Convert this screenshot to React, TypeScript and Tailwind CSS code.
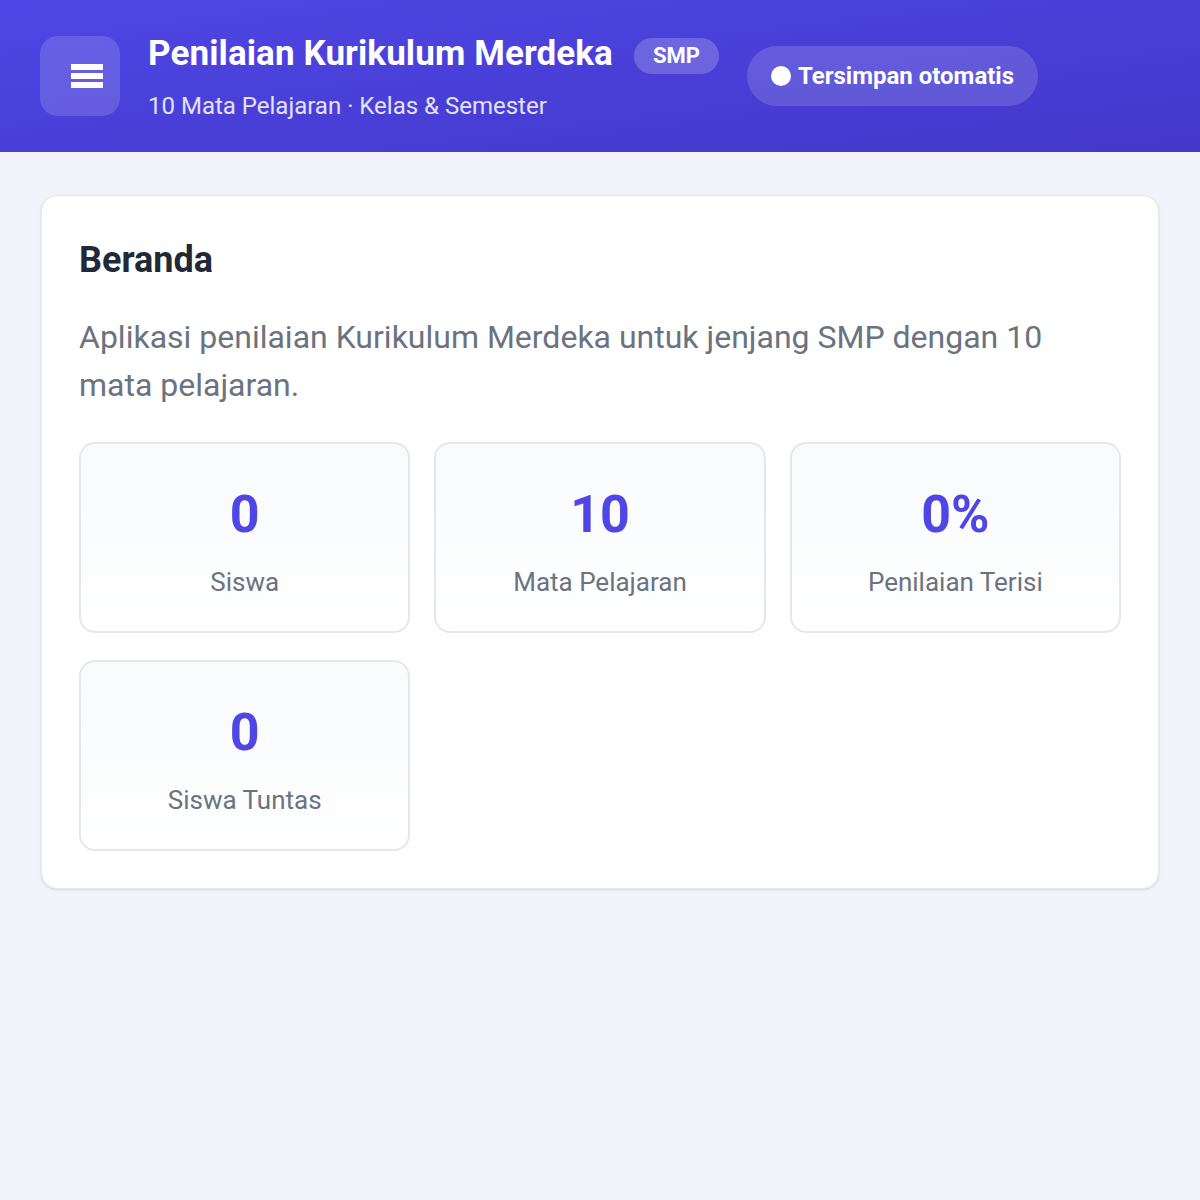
const stats = [
  { value: "0", label: "Siswa" },
  { value: "10", label: "Mata Pelajaran" },
  { value: "0%", label: "Penilaian Terisi" },
  { value: "0", label: "Siswa Tuntas" },
];

function Header() {
  return (
    <header className="h-[152px] bg-gradient-to-br from-[#4f46e5] to-[#4338ca] px-10 flex items-center text-white">
      <button className="w-20 h-20 rounded-[18px] bg-white/15 flex items-center justify-center shrink-0">
        <svg width="32" height="24" viewBox="0 0 32 24" fill="white" className="ml-[14px]">
          <rect x="0" y="0" width="32" height="6" />
          <rect x="0" y="9" width="32" height="6" />
          <rect x="0" y="18" width="32" height="6" />
        </svg>
      </button>

      <div className="ml-7 flex flex-col">
        <div className="flex items-center gap-[21px]">
          <h1 className="text-[35px] leading-[42px] font-bold tracking-[0.1px]">
            Penilaian Kurikulum Merdeka
          </h1>
          <span className="mt-[4px] h-[36px] px-[19px] rounded-full bg-white/20 text-[22px] font-bold flex items-center">
            SMP
          </span>
        </div>
        <p className="mt-[17px] text-[24px] leading-7 text-white/85">
          10 Mata Pelajaran · Kelas &amp; Semester
        </p>
      </div>

      <div className="ml-7 h-[60px] pl-6 pr-6 rounded-full bg-white/15 flex items-center gap-[7px] text-[24px] font-bold">
        <span className="w-[20px] h-[20px] rounded-full bg-white" />
        Tersimpan otomatis
      </div>
    </header>
  );
}

export default function App() {
  return (
    <div className="min-h-[1200px] bg-[#f3f4fb] font-['Roboto',sans-serif]">
      <Header />

      <main className="px-[41px] pt-[43px]">
        <section className="bg-white rounded-2xl border border-[#e5e7eb] shadow-sm px-[37px] pt-[42px] pb-[37px]">
          <h2 className="text-[36px] leading-[44px] font-bold text-[#1f2937]">
            Beranda
          </h2>
          <p className="mt-[31px] text-[32px] leading-[48px] text-[#6b7280]">
            Aplikasi penilaian Kurikulum Merdeka untuk jenjang SMP dengan 10 mata pelajaran.
          </p>

          <div className="mt-[33px] grid grid-cols-3 gap-x-6 gap-y-[27px]">
            {stats.map((s, i) => (
              <div
                key={i}
                className="h-[191px] rounded-2xl border-2 border-[#e5e7eb] bg-gradient-to-b from-[#f8fafc] to-white flex flex-col items-center pt-[41px]"
              >
                <div className="text-[52px] leading-[60px] font-bold text-[#4f46e5]">
                  {s.value}
                </div>
                <div className="mt-[21px] text-[26px] leading-8 text-[#6b7280]">
                  {s.label}
                </div>
              </div>
            ))}
          </div>
        </section>
      </main>
    </div>
  );
}
